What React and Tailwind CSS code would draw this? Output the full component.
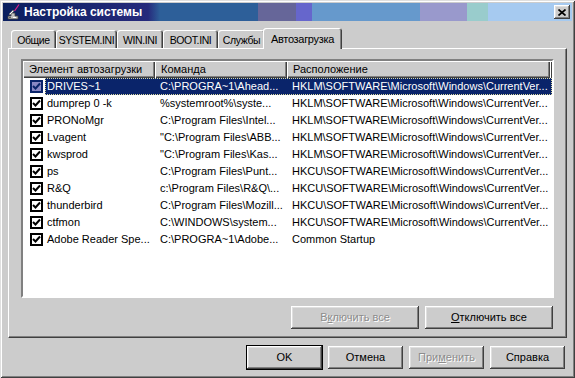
import React from "react";

const rows = [
  ["DRIVES~1", "C:\\PROGRA~1\\Ahead...", "HKLM\\SOFTWARE\\Microsoft\\Windows\\CurrentVer..."],
  ["dumprep 0 -k", "%systemroot%\\syste...", "HKLM\\SOFTWARE\\Microsoft\\Windows\\CurrentVer..."],
  ["PRONoMgr", "C:\\Program Files\\Intel...", "HKLM\\SOFTWARE\\Microsoft\\Windows\\CurrentVer..."],
  ["Lvagent", "\"C:\\Program Files\\ABB...", "HKLM\\SOFTWARE\\Microsoft\\Windows\\CurrentVer..."],
  ["kwsprod", "\"C:\\Program Files\\Kas...", "HKLM\\SOFTWARE\\Microsoft\\Windows\\CurrentVer..."],
  ["ps", "C:\\Program Files\\Punt...", "HKCU\\SOFTWARE\\Microsoft\\Windows\\CurrentVer..."],
  ["R&Q", "c:\\Program Files\\R&Q\\...", "HKCU\\SOFTWARE\\Microsoft\\Windows\\CurrentVer..."],
  ["thunderbird", "C:\\Program Files\\Mozill...", "HKCU\\SOFTWARE\\Microsoft\\Windows\\CurrentVer..."],
  ["ctfmon", "C:\\WINDOWS\\system...", "HKCU\\SOFTWARE\\Microsoft\\Windows\\CurrentVer..."],
  ["Adobe Reader Spe...", "C:\\PROGRA~1\\Adobe...", "Common Startup"],
];

const tabs = [
  ["Общие", "w-[45px]"],
  ["SYSTEM.INI", "w-[61px]"],
  ["WIN.INI", "w-[46px]"],
  ["BOOT.INI", "w-[55px]"],
  ["Службы", "w-[47px]"],
];

const raised =
  "shadow-[inset_-1px_-1px_0_#404040,inset_1px_1px_0_#ffffff,inset_-2px_-2px_0_#808080,inset_2px_2px_0_#dfdfdf]";

function Check({ selected }) {
  return (
    <div
      className={`flex h-[13px] w-[13px] items-center justify-center border-2 ${
        selected ? "border-[#0a246a] bg-[#8a88c4]" : "border-black bg-white"
      }`}
    >
      <svg width="9" height="9" viewBox="0 0 9 9">
        <path d="M1 4 L3.5 6.5 L8 1.5" fill="none" stroke={selected ? "#0a246a" : "#000"} strokeWidth="2" />
      </svg>
    </div>
  );
}

function Button({ children, disabled, isDefault, className = "" }) {
  return (
    <div
      className={`flex h-[23px] items-center justify-center bg-[#cccccc] ${raised} ${
        isDefault ? "outline outline-1 outline-black" : ""
      } ${disabled ? "text-[#8c8c8c] [text-shadow:1px_1px_0_#ffffff]" : "text-black"} ${className}`}
    >
      {children}
    </div>
  );
}

export default function App() {
  return (
    <div className="flex h-[378px] w-[575px] flex-col bg-[#cccccc] p-[3px] font-['Liberation_Sans',Arial,sans-serif] text-[11px] text-black shadow-[inset_1px_1px_0_#dfdfdf,inset_-1px_-1px_0_#404040,inset_2px_2px_0_#ffffff,inset_-2px_-2px_0_#808080]">
      {/* title bar */}
      <div className="flex h-[18px] items-center bg-[linear-gradient(90deg,#0a1f5f_0px,#262a7c_145px,#2d5f99_157px,#2d5f99_255px,#666699_255px,#666699_293px,#6666cc_293px,#6666cc_309px,#6699cc_309px,#6699cc_417px,#9999cc_417px,#9999cc_464px,#99cccc_464px,#99cccc_485px,#a6caf0_485px,#a6caf0_100%)] pl-[2px] pr-[2px]">
        <svg width="16" height="16" viewBox="0 0 16 16" className="shrink-0">
          <path d="M3 15 L13 15 L13 12 L10 12 L10 9 L6 9 L6 12 L3 12 Z" fill="#c0c0c0" stroke="#404040" strokeWidth="0.8" />
          <path d="M4 10 L8 6 L9 7 L5 11 Z" fill="#ffffff" stroke="#606060" strokeWidth="0.6" />
          <path d="M9.5 7 L14 0.5" stroke="#e0208a" strokeWidth="1.2" />
          <rect x="4" y="13" width="2" height="1" fill="#606060" />
          <rect x="8" y="13" width="3" height="1" fill="#ffffff" />
        </svg>
        <span className="ml-[3px] text-[12px] font-bold text-white">Настройка системы</span>
        <div className={`ml-auto flex h-[14px] w-[16px] items-center justify-center bg-[#cccccc] ${raised}`}>
          <svg width="8" height="7" viewBox="0 0 8 7">
            <path d="M0.5 0.5 L7.5 6.5 M7.5 0.5 L0.5 6.5" stroke="#000" strokeWidth="1.7" />
          </svg>
        </div>
      </div>

      {/* tabs + panel */}
      <div className="flex flex-col px-[5px] pt-[7px]">
        <div className="flex h-[20px] items-end pl-[3px]">
          {tabs.map(([label, w]) => (
            <div
              key={label}
              className={`flex h-[18px] ${w} items-center justify-center whitespace-nowrap rounded-t-[3px] bg-[#cccccc] pt-[3px] text-[10.5px] tracking-[-0.4px] shadow-[inset_1px_1px_0_#ffffff,inset_-1px_0_0_#404040,inset_-2px_0_0_#808080]`}
            >
              {label}
            </div>
          ))}
          <div className="relative z-10 -mb-px -ml-[2px] flex h-[21px] w-[79px] items-start justify-center whitespace-nowrap rounded-t-[3px] bg-[#cccccc] pt-[3px] tracking-[-0.3px] shadow-[inset_1px_1px_0_#ffffff,inset_-1px_0_0_#404040,inset_-2px_0_0_#808080]">
            Автозагрузка
          </div>
        </div>

        <div className="flex h-[290px] flex-col border border-t-white border-l-white border-r-[#404040] border-b-[#404040] px-[12px] pt-[10px] shadow-[inset_-1px_-1px_0_#808080]">
          {/* list view */}
          <div className="flex h-[239px] flex-col overflow-hidden border-2 border-t-[#808080] border-l-[#808080] border-r-white border-b-white bg-white">
            <div className="flex h-[17px] shrink-0 bg-[#cccccc]">
              {[
                ["Элемент автозагрузки", "w-[132px]"],
                ["Команда", "w-[132px]"],
                ["Расположение", "w-[263px]"],
              ].map(([label, w]) => (
                <div
                  key={label}
                  className={`flex ${w} shrink-0 items-center pl-[6px] shadow-[inset_1px_1px_0_#ffffff,inset_-1px_-1px_0_#404040,inset_-2px_-2px_0_#808080]`}
                >
                  {label}
                </div>
              ))}
              <div className="flex-1 shadow-[inset_1px_1px_0_#ffffff,inset_-1px_-1px_0_#404040,inset_-2px_-2px_0_#808080]" />
            </div>
            {rows.map(([name, cmd, loc], i) => {
              const sel = i === 0;
              return (
                <div key={name} className="flex h-[17px] shrink-0 items-center">
                  <div className="flex w-[22px] shrink-0 pl-[7px]">
                    <Check selected={sel} />
                  </div>
                  <div
                    className={`flex h-full flex-1 items-center whitespace-nowrap ${
                      sel ? "bg-[#0a246a] text-white outline outline-1 -outline-offset-1 outline-dotted outline-[#d8d8a0]" : ""
                    }`}
                  >
                    <span className="w-[110px] shrink-0 overflow-hidden pl-[2px]">{name}</span>
                    <span className="w-[132px] shrink-0 overflow-hidden pl-[5px]">{cmd}</span>
                    <span className="flex-1 overflow-hidden pl-[5px]">{loc}</span>
                  </div>
                </div>
              );
            })}
          </div>

          <div className="mt-[8px] flex justify-end gap-[6px] pr-[1px]">
            <Button disabled className="w-[128px]">
              <span>
                В<span className="underline">к</span>лючить все
              </span>
            </Button>
            <Button className="w-[128px]">
              <span>
                <span className="underline">О</span>тключить все
              </span>
            </Button>
          </div>
        </div>
      </div>

      {/* dialog buttons */}
      <div className="mt-[8px] flex justify-end gap-[6px] pr-[7px]">
        <Button isDefault className="w-[75px]">OK</Button>
        <Button className="w-[75px]">Отмена</Button>
        <Button disabled className="w-[75px]">
          <span>
            При<span className="underline">м</span>енить
          </span>
        </Button>
        <Button className="w-[75px]">Справка</Button>
      </div>
    </div>
  );
}
